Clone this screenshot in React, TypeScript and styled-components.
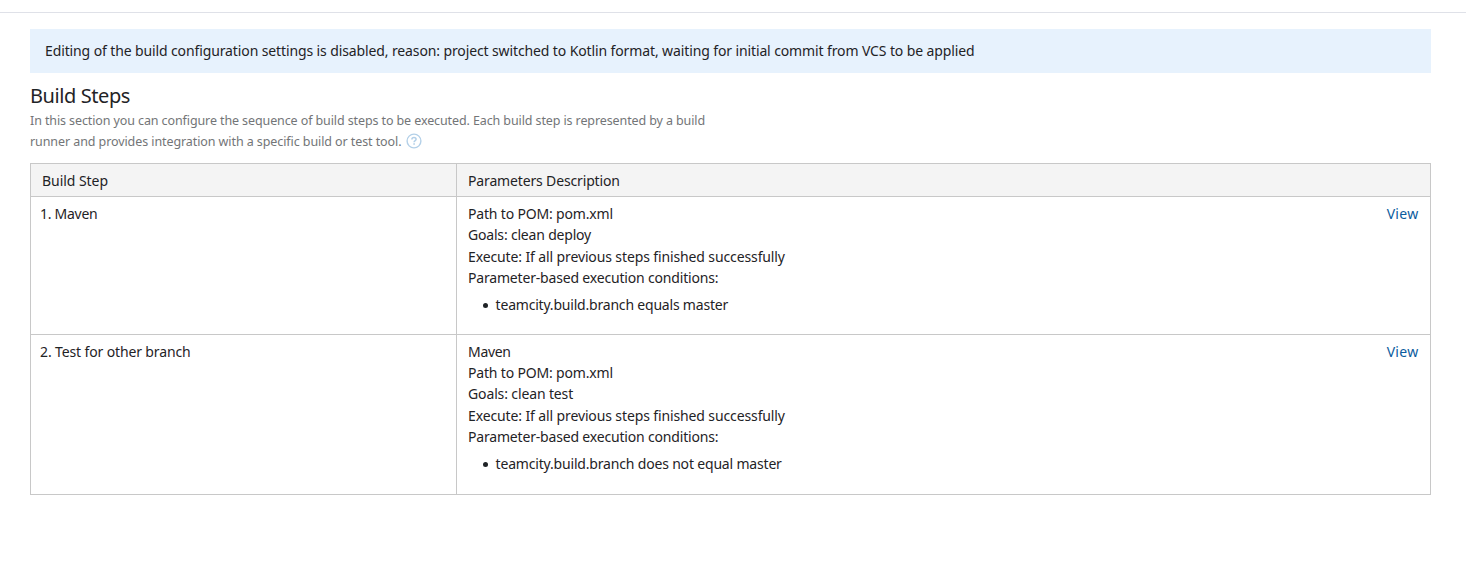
import React from "react";
import styled, { createGlobalStyle } from "styled-components";

const GlobalStyle = createGlobalStyle`
  body {
    margin: 0;
    background: #fff;
    color: #1f2326;
    font-family: "Noto Sans", "Open Sans", sans-serif;
    font-size: 14px;
    line-height: 21.3px;
  }
`;

const Page = styled.main`
  border-top: 1px solid #dfe1e8;
  margin-top: 12px;
  padding: 16px 35px 0 30px;
`;

const Notice = styled.div`
  display: flex;
  align-items: center;
  height: 44px;
  padding: 0 15px;
  background: #e7f2fd;
`;

const Text = styled.span<{ $tracking?: number }>`
  letter-spacing: ${(p) => p.$tracking ?? 0}px;
  white-space: nowrap;
`;

const Title = styled.h2`
  margin: 9px 0 0;
  font-size: 20px;
  font-weight: 400;
  line-height: 28px;
  letter-spacing: -0.42px;
`;

const Description = styled.p`
  margin: 0;
  font-size: 12.5px;
  line-height: 21px;
  color: #737577;
`;

const DescriptionLine = styled.span`
  display: flex;
  align-items: center;
  height: 21px;
`;

const HelpIcon = styled.svg`
  width: 16px;
  height: 16px;
  margin: 0 0 2px 4.7px;
`;

const Table = styled.div`
  margin-top: 11px;
  border: 1px solid #c8c8c8;
`;

const Row = styled.div<{ $height: number }>`
  display: grid;
  grid-template-columns: 425px 1fr;
  height: ${(p) => p.$height}px;

  & + & {
    border-top: 1px solid #c8c8c8;
  }
`;

const HeaderCell = styled.div`
  display: flex;
  align-items: center;
  padding: 1px 11px 0;
  background: #f4f4f4;

  & + & {
    border-left: 1px solid #c8c8c8;
  }
`;

const NameCell = styled.div`
  padding: 6px 9px;
`;

const DetailsCell = styled.div`
  display: flex;
  justify-content: space-between;
  align-items: flex-start;
  border-left: 1px solid #c8c8c8;
  padding: 6px 12px 0 11px;
`;

const Detail = styled.div`
  height: 21.3px;
`;

const Conditions = styled.ul`
  margin: 5.5px 0 0;
  padding: 0;
  list-style: none;
`;

const Condition = styled.li`
  display: flex;
  align-items: center;
  padding-left: 15px;

  &::before {
    content: "";
    width: 5px;
    height: 5px;
    margin: 2px 7.6px 0 0;
    border-radius: 50%;
    background: #1f2326;
  }
`;

const ViewLink = styled.a`
  color: #0b5c9e;
  letter-spacing: 0.3px;
  margin-right: -0.5px;
  text-decoration: none;
`;

type Label = { text: string; tracking: number };

type Step = {
  name: Label;
  height: number;
  details: Label[];
  condition: Label;
};

const steps: Step[] = [
  {
    name: { text: "1. Maven", tracking: -0.28 },
    height: 136.85,
    details: [
      { text: "Path to POM: pom.xml", tracking: -0.17 },
      { text: "Goals: clean deploy", tracking: -0.19 },
      { text: "Execute: If all previous steps finished successfully", tracking: -0.12 },
      { text: "Parameter-based execution conditions:", tracking: -0.18 },
    ],
    condition: { text: "teamcity.build.branch equals master", tracking: -0.2 },
  },
  {
    name: { text: "2. Test for other branch", tracking: -0.13 },
    height: 159.15,
    details: [
      { text: "Maven", tracking: -0.3 },
      { text: "Path to POM: pom.xml", tracking: -0.17 },
      { text: "Goals: clean test", tracking: -0.13 },
      { text: "Execute: If all previous steps finished successfully", tracking: -0.12 },
      { text: "Parameter-based execution conditions:", tracking: -0.18 },
    ],
    condition: { text: "teamcity.build.branch does not equal master", tracking: -0.18 },
  },
];

export default function App() {
  return (
    <>
      <GlobalStyle />
      <Page>
        <Notice>
          <Text $tracking={-0.117}>
            Editing of the build configuration settings is disabled, reason: project switched to Kotlin format, waiting for initial commit from VCS to be applied
          </Text>
        </Notice>
        <Title>Build Steps</Title>
        <Description>
          <DescriptionLine>
            <Text $tracking={-0.105}>
              In this section you can configure the sequence of build steps to be executed. Each build step is represented by a build
            </Text>
          </DescriptionLine>
          <DescriptionLine>
            <Text $tracking={-0.085}>runner and provides integration with a specific build or test tool.</Text>
            <HelpIcon viewBox="0 0 16 16" fill="none" stroke="#b3d0e8" aria-label="Help">
              <circle cx="8" cy="8" r="6.9" strokeWidth="1.4" />
              <path d="M5.9 6.4C5.9 5.2 6.8 4.5 8 4.5s2.1.7 2.1 1.8C10.1 7.6 8.1 7.6 8.1 9.3" strokeWidth="1.5" />
              <path d="M8.1 10.2V11.8" strokeWidth="1.6" />
            </HelpIcon>
          </DescriptionLine>
        </Description>
        <Table>
          <Row $height={32}>
            <HeaderCell>
              <Text $tracking={-0.05}>Build Step</Text>
            </HeaderCell>
            <HeaderCell>
              <Text $tracking={-0.15}>Parameters Description</Text>
            </HeaderCell>
          </Row>
          {steps.map((step) => (
            <Row key={step.name.text} $height={step.height}>
              <NameCell>
                <Text $tracking={step.name.tracking}>{step.name.text}</Text>
              </NameCell>
              <DetailsCell>
                <div>
                  {step.details.map((detail) => (
                    <Detail key={detail.text}>
                      <Text $tracking={detail.tracking}>{detail.text}</Text>
                    </Detail>
                  ))}
                  <Conditions>
                    <Condition>
                      <Text $tracking={step.condition.tracking}>{step.condition.text}</Text>
                    </Condition>
                  </Conditions>
                </div>
                <ViewLink>View</ViewLink>
              </DetailsCell>
            </Row>
          ))}
        </Table>
      </Page>
    </>
  );
}
